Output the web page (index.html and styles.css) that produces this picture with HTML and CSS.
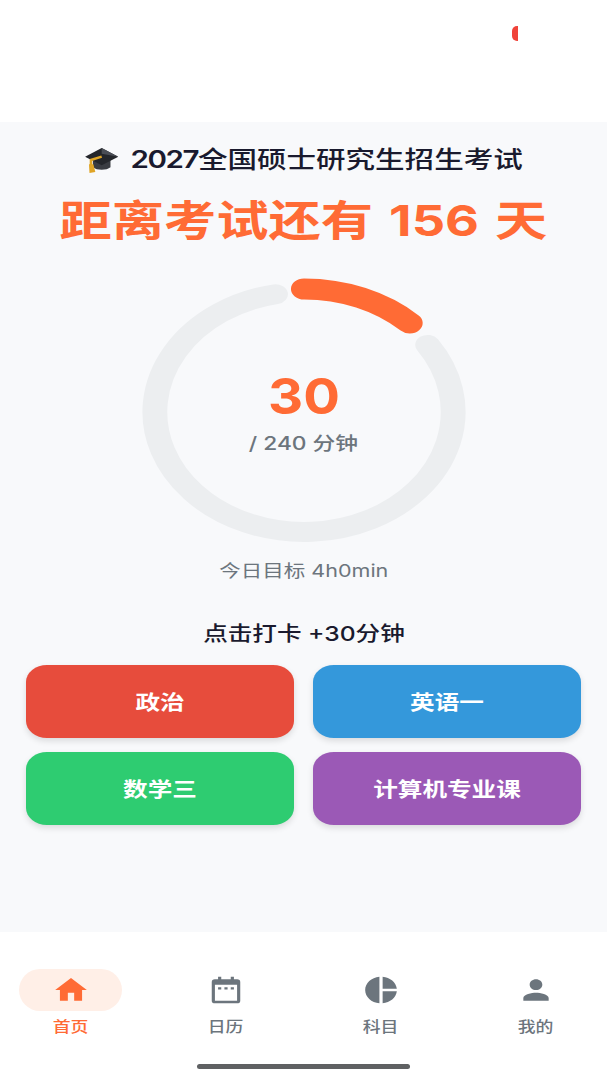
FILE: index.html
```html
<!DOCTYPE html>
<html lang="zh-CN">
<head>
<meta charset="utf-8">
<title>考研倒计时</title>
<link rel="stylesheet" href="styles.css">
</head>
<body>
<div class="app">
  <header class="status"><span class="status-dot"></span></header>
  <main class="main">
    <h1 class="title"><span class="wide title-row">
      <svg class="hat" viewBox="0 0 34 26" preserveAspectRatio="none" aria-hidden="true">
        <path fill="#3a3c42" d="M8 12v8c4 3.500 14 3.500 18 0v-8z"/>
        <path fill="#24262b" d="M17 0 34 9 17 18 0 9z"/>
        <path fill="#4a4d55" d="M17 0 34 9 17 6z"/>
        <path fill="none" stroke="#e0a526" stroke-width="2.600" d="M17 9 6 12.500v6"/>
        <path fill="#e0a526" d="M4 17h4.500l2 8-6 1z"/>
      </svg>
      <span><span class="digits">2027</span>全国硕士研究生招生考试</span>
    </span></h1>
    <p class="countdown"><span class="wide">距离考试还有 156 天</span></p>
    <section class="ring">
      <svg class="ring-svg" viewBox="0 0 280 280" preserveAspectRatio="none" aria-hidden="true">
        <path class="ring-track" d="M239.5 72.9A120 120 0 1 1 117.1 22.2"/>
        <path class="ring-value" d="M140 17A123 123 0 0 1 225 51"/>
      </svg>
      <div class="ring-text">
        <span class="wide ring-num">30</span>
        <span class="wide ring-unit">/ 240 分钟</span>
      </div>
    </section>
    <p class="goal"><span class="wide">今日目标 4h0min</span></p>
    <p class="prompt"><span class="wide">点击打卡 +30分钟</span></p>
    <div class="subjects">
      <button class="subject red"><span class="wide">政治</span></button>
      <button class="subject blue"><span class="wide">英语一</span></button>
      <button class="subject green"><span class="wide">数学三</span></button>
      <button class="subject purple"><span class="wide">计算机专业课</span></button>
    </div>
  </main>
  <nav class="nav">
    <div class="tabs">
      <a class="tab active">
        <span class="tab-icon"><svg viewBox="0 0 24 24" preserveAspectRatio="none"><path d="M10 20v-6h4v6h5v-8h3L12 3 2 12h3v8z"/></svg></span>
        <span class="wide tab-label">首页</span>
      </a>
      <a class="tab">
        <span class="tab-icon"><svg viewBox="0 0 24 24" preserveAspectRatio="none"><path fill-rule="evenodd" d="M7 2h2v2h6V2h2v2h2a2 2 0 0 1 2 2v14a2 2 0 0 1-2 2H5a2 2 0 0 1-2-2V6a2 2 0 0 1 2-2h2zM5 8v12h14V8zM7 10h2v1.6H7zM11 10h2v1.6h-2zM15 10h2v1.6h-2z"/></svg></span>
        <span class="wide tab-label">日历</span>
      </a>
      <a class="tab">
        <span class="tab-icon"><svg viewBox="0 0 24 24" preserveAspectRatio="none"><path d="M11 2v20c-5.07-.5-9-4.79-9-10s3.93-9.500 9-10zm2.03 0v8.990H22c-.47-4.740-4.240-8.520-8.970-8.990zm0 11.010V22c4.740-.47 8.500-4.250 8.970-8.990h-8.970z"/></svg></span>
        <span class="wide tab-label">科目</span>
      </a>
      <a class="tab">
        <span class="tab-icon"><svg viewBox="0 0 24 24" preserveAspectRatio="none"><path d="M12 12c2.21 0 4-1.79 4-4s-1.79-4-4-4-4 1.79-4 4 1.79 4 4 4zm0 2c-2.67 0-8 1.340-8 4v2h16v-2c0-2.660-5.330-4-8-4z"/></svg></span>
        <span class="wide tab-label">我的</span>
      </a>
    </div>
    <div class="home-bar"></div>
  </nav>
</div>
</body>
</html>
```

FILE: styles.css
```css
* { box-sizing: border-box; }
html, body { margin: 0; padding: 0; }
body {
  width: 607px;
  height: 1080px;
  overflow: hidden;
  background: #fff;
  font-family: Inter, "Noto Sans CJK SC", sans-serif;
}
p, h1 { margin: 0; }
.app { display: flex; flex-direction: column; height: 1080px; }
.wide { display: inline-block; transform: scaleX(1.23); white-space: pre; }

.status { height: 122px; background: #fff; position: relative; }
.status-dot {
  position: absolute;
  left: 512px;
  top: 26px;
  width: 6px;
  height: 15px;
  background: #f0433a;
  border-radius: 5px 0 0 5px;
}

.main {
  flex: 1;
  background: #f8f9fb;
  padding: 23px 26px 0;
  text-align: center;
}
.title {
  display: flex;
  justify-content: center;
  font-size: 24px;
  line-height: 30px;
  font-weight: 500;
  color: #1a1a2e;
}
.title-row { display: inline-flex; align-items: center; gap: 10px; }
.digits { letter-spacing: -1.2px; font-weight: 600; }
.hat { width: 27px; height: 25px; flex: none; }
.countdown {
  margin-top: 18px;
  font-size: 42.5px;
  line-height: 56px;
  font-weight: 700;
  color: #ff6b35;
  word-spacing: 3px;
}

.ring {
  position: relative;
  height: 280px;
  margin-top: 23px;
  display: flex;
  justify-content: center;
}
.ring-svg { width: 348px; height: 280px; flex: none; }
.ring-track { fill: none; stroke: #eceef0; stroke-width: 20; stroke-linecap: round; }
.ring-value { fill: none; stroke: #ff6b35; stroke-width: 21; stroke-linecap: round; }
.ring-text {
  position: absolute;
  left: 0;
  right: 0;
  top: 92px;
  display: flex;
  flex-direction: column;
  align-items: center;
}
.ring-num { font-size: 50px; line-height: 64px; font-weight: 700; color: #ff6b35; transform: scaleX(1.09); }
.ring-unit { margin-top: 1px; font-size: 18.5px; line-height: 28px; font-weight: 500; color: #6c757d; }

.goal { margin-top: 7px; font-size: 17.5px; line-height: 24px; color: #6c757d; }
.prompt { margin-top: 37px; font-size: 20px; line-height: 28px; font-weight: 500; color: #1a1a2e; }

.subjects {
  margin-top: 17px;
  display: grid;
  grid-template-columns: 268px 268px;
  grid-auto-rows: 73px;
  column-gap: 19px;
  row-gap: 14px;
}
.subject {
  border: 0;
  padding: 0;
  border-radius: 21px / 17px;
  color: #fff;
  font: 700 20px Inter, "Noto Sans CJK SC", sans-serif;
  box-shadow: 0 3px 6px rgba(0, 0, 0, 0.12);
}
.red { background: #e74c3c; }
.blue { background: #3498db; }
.green { background: #2ecc71; }
.purple { background: #9b59b6; }

.nav { height: 148px; background: #fff; padding-top: 37px; }
.tabs {
  display: grid;
  grid-template-columns: repeat(4, 155px);
  justify-content: center;
  padding-right: 1px;
}
.tab {
  display: flex;
  flex-direction: column;
  align-items: center;
  color: #6c757d;
}
.tab-icon {
  width: 103px;
  height: 42px;
  border-radius: 21px;
  display: flex;
  align-items: center;
  justify-content: center;
}
.tab-icon svg { width: 38px; height: 32px; fill: currentColor; }
.tab-label { margin-top: 6px; font-size: 14.5px; line-height: 20px; font-weight: 500; }
.active { color: #ff6b35; }
.active .tab-icon { background: #ffefe7; }

.home-bar {
  width: 213px;
  height: 5px;
  margin: 27px auto 0;
  border-radius: 3px;
  background: #5f6163;
}
```
